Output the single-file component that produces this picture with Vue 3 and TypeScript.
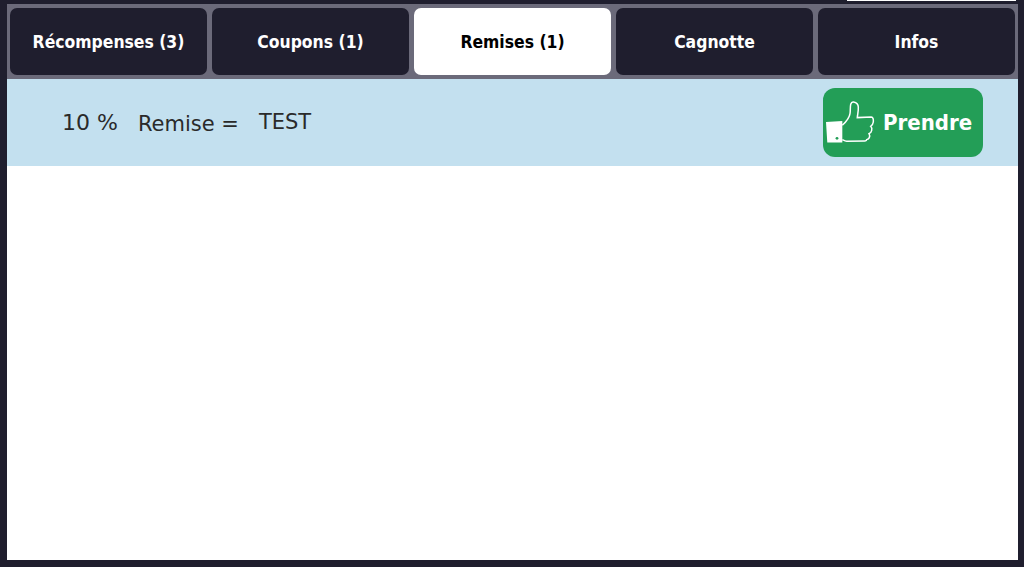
<template>
  <div class="screen">
    <div class="top"><div class="top-strip"></div></div>
    <div class="panel">
      <nav class="tabs">
        <div
          v-for="tab in tabs"
          :key="tab"
          class="tab"
          :class="{ active: tab === current }"
          @click="current = tab"
        >{{ tab }}</div>
      </nav>
      <div class="row">
        <span class="amount">10 %</span>
        <span class="label">Remise =</span>
        <span class="name">TEST</span>
        <button class="take">
          <svg class="thumb" width="50" height="44" viewBox="0 -0.8 50 44">
            <path d="M0 21.2L16.3 20.2V41.8H1.3Z" fill="#fff" />
            <circle cx="11" cy="37.5" r="1.4" fill="#239e57" />
            <path
              d="M16.3 24.5C20 21 23.5 17 24 12.8C24.6 9.5 24 6.5 24.7 3.5C25.3 1.5 26.5 1 27.5 1.2C30.5 1.8 32.3 3.8 32.3 6.2C32.6 10 31.5 13.5 31.3 16.8L45.2 16.2C46.8 16.4 47.6 18.5 47.3 21.2C47 23.5 45.8 24.8 44.7 25.5C46 26.8 46 28.5 45.7 29.5C45.3 31.5 44.2 32.3 43 32.8C43.8 34.2 43.8 35.8 43.3 36.8C42.8 38 41.8 38.5 40.7 38.8C40.7 39.8 40 40.2 39 40.2L20.7 40.5C19 40.4 17.8 39.6 16.3 38.8"
              fill="none"
              stroke="#fff"
              stroke-width="1.5"
            />
          </svg>
          <span>Prendre</span>
        </button>
      </div>
    </div>
  </div>
</template>

<script setup lang="ts">
import { ref } from 'vue'

const tabs: string[] = ['Récompenses (3)', 'Coupons (1)', 'Remises (1)', 'Cagnotte', 'Infos']
const current = ref('Remises (1)')
</script>

<style>
html, body {
  margin: 0;
  background: #1f1e2e;
}
</style>

<style scoped>
.screen {
  width: 1024px;
  height: 567px;
  box-sizing: border-box;
  padding: 0 6px 7px 7px;
  display: flex;
  flex-direction: column;
  background: #1f1e2e;
  font-family: "DejaVu Sans", sans-serif;
}

.top {
  height: 4px;
  display: flex;
  justify-content: flex-end;
  padding-right: 2px;
}

.top-strip {
  width: 169px;
  height: 1px;
  background: #fff;
}

.panel {
  flex: 1;
  background: #fff;
}

.tabs {
  display: flex;
  gap: 5px;
  height: 75px;
  box-sizing: border-box;
  padding: 4px 3px;
  background: #6b6a7a;
}

.tab {
  width: 197px;
  display: flex;
  align-items: center;
  justify-content: center;
  border-radius: 7px;
  background: #1f1e2e;
  color: #fff;
  font-size: 17.4px;
  font-weight: 700;
  font-stretch: condensed;
  cursor: pointer;
}

.tab.active {
  background: #fff;
  color: #000;
}

.row {
  height: 87px;
  display: flex;
  align-items: center;
  padding-left: 55px;
  box-sizing: border-box;
  background: #c3e0ef;
  color: #2a2a2a;
  font-size: 21px;
}

.amount {
  font-size: 22px;
  margin-bottom: 1px;
}

.label {
  margin-left: 20px;
  margin-top: 3px;
}

.name {
  margin-left: 20px;
  margin-bottom: 1px;
}

.take {
  margin-left: auto;
  margin-right: 35px;
  margin-bottom: 1px;
  width: 160px;
  height: 69px;
  padding: 0 0 0 3px;
  border: none;
  border-radius: 12px;
  background: #239e57;
  color: #fff;
  font-family: inherit;
  font-size: 22px;
  font-weight: 700;
  font-stretch: condensed;
  display: flex;
  align-items: center;
  gap: 7px;
}

.thumb {
  flex: none;
}
</style>
